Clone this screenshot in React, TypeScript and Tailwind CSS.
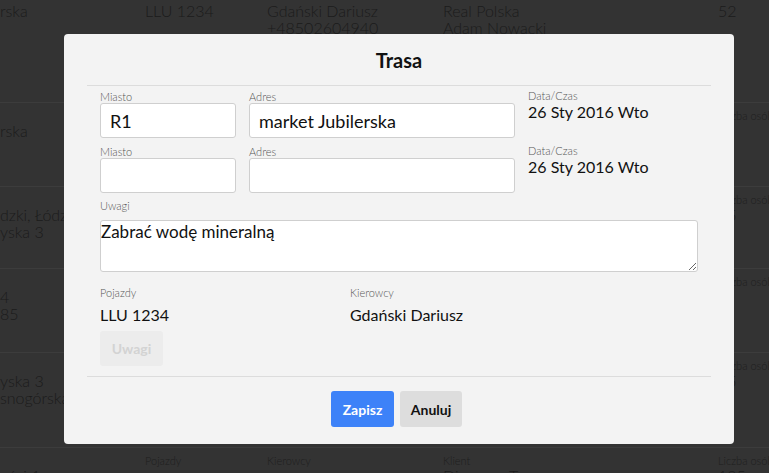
import React from "react";

type Row = {
  h: string;
  col1: string[];
  pojazdy?: string[];
  kierowcy?: string[];
  klient?: string[];
  liczba?: string;
  showLabels?: boolean;
};

const ROWS: Row[] = [
  {
    h: "h-[103px]",
    col1: ["rska"],
    pojazdy: ["LLU 1234"],
    kierowcy: ["Gdański Dariusz", "+48502604940"],
    klient: ["Real Polska", "Adam Nowacki"],
    liczba: "52",
  },
  { h: "h-[84px]", col1: ["rska"], liczba: "2", showLabels: true },
  { h: "h-[82px]", col1: ["dzki, Łódz", "yska 3"], liczba: "25", showLabels: true },
  { h: "h-[84px]", col1: ["4", "85"], liczba: "8", showLabels: true },
  { h: "h-[95px]", col1: ["yska 3", "snogórska"], liczba: "25", showLabels: true },
  { h: "h-[60px]", col1: ["ości 1"], klient: ["Dinozaur Tour"], liczba: "125", showLabels: true },
];

function Cell({ label, lines, show }: { label: string; lines?: string[]; show?: boolean }) {
  return (
    <div className="overflow-hidden whitespace-nowrap">
      {show && <div className="text-[11px] leading-[13px] text-[#1e1e1e]">{label}</div>}
      {(lines ?? []).map((l) => (
        <div key={l} className="text-[16px] leading-[17px]">{l}</div>
      ))}
    </div>
  );
}

function Background() {
  return (
    <div className="font-light text-[#1b1b1b]">
      {ROWS.map((r, i) => (
        <div
          key={i}
          className={`${r.h} grid grid-cols-[145px_122px_176px_275px_1fr] border-b border-[#3c3c3c] ${
            i === 0 ? "pt-[2px] items-start" : "pt-[6px]"
          }`}
        >
          <div className="overflow-hidden whitespace-nowrap">
            {r.showLabels && <div className="h-[13px]" />}
            {r.col1.map((l) => (
              <div key={l} className="text-[16px] leading-[17px]">{l}</div>
            ))}
          </div>
          <Cell label="Pojazdy" lines={r.pojazdy} show={r.showLabels} />
          <Cell label="Kierowcy" lines={r.kierowcy} show={r.showLabels} />
          <Cell label="Klient" lines={r.klient} show={r.showLabels} />
          <Cell label="Liczba osób" lines={r.liczba ? [r.liczba] : []} show={r.showLabels} />
        </div>
      ))}
    </div>
  );
}

function Label({ children, className = "" }: { children: React.ReactNode; className?: string }) {
  return <div className={`text-[11px] font-light leading-[12px] text-[#555] ${className}`}>{children}</div>;
}

function Input({ value = "" }: { value?: string }) {
  return (
    <input
      readOnly
      value={value}
      className="h-[35px] w-full rounded-[3px] border border-[#cfcfcf] bg-white px-[9px] text-[18px] text-[#111] outline-none"
    />
  );
}

function Stop({ miasto, adres }: { miasto?: string; adres?: string }) {
  return (
    <div className="grid grid-cols-[136px_266px_1fr] gap-x-[13px]">
      <div>
        <Label className="pt-[5px]">Miasto</Label>
        <Input value={miasto} />
      </div>
      <div>
        <Label className="pt-[5px]">Adres</Label>
        <Input value={adres} />
      </div>
      <div>
        <Label className="pt-[4px]">Data/Czas</Label>
        <div className="text-[16px] leading-[19px] text-[#111]">26 Sty 2016 Wto</div>
      </div>
    </div>
  );
}

export default function App() {
  return (
    <div
      className="relative h-[473px] w-[769px] overflow-hidden bg-[#333333]"
      style={{ fontFamily: "Lato, 'Noto Sans', sans-serif" }}
    >
      <Background />

      <div className="absolute left-[64px] top-[34px] flex h-[410px] w-[670px] flex-col rounded-[4px] bg-[#f3f3f3]">
        <div className="mx-[23px] flex h-[52px] items-center justify-center border-b border-[#dcdcdc]">
          <h2 className="text-[20px] font-bold text-[#111]">Trasa</h2>
        </div>

        <div className="mx-[23px] border-b border-[#dcdcdc] px-[13px] pb-[10px]">
          <Stop miasto="R1" adres="market Jubilerska" />
          <div className="mt-[3px]">
            <Stop />
          </div>

          <Label className="mt-[7px] mb-[8px]">Uwagi</Label>
          <textarea
            readOnly
            value="Zabrać wodę mineralną"
            className="block h-[52px] w-full rounded-[3px] border border-[#cfcfcf] bg-white px-0 py-[1px] text-[17px] leading-[20px] text-[#111] outline-none"
          />

          <div className="mt-[15px] grid grid-cols-[250px_1fr]">
            <div>
              <Label>Pojazdy</Label>
              <div className="mt-[6px] text-[16px] leading-[19px] text-[#111]">LLU 1234</div>
            </div>
            <div>
              <Label>Kierowcy</Label>
              <div className="mt-[6px] text-[16px] leading-[19px] text-[#111]">Gdański Dariusz</div>
            </div>
          </div>

          <button
            disabled
            className="mt-[7px] h-[35px] w-[63px] rounded-[3px] bg-[#ececec] text-[14px] font-bold text-[#d3d3d3]"
          >
            Uwagi
          </button>
        </div>

        <div className="mt-[14px] flex justify-center gap-[6px] pr-[5px]">
          <button className="h-[36px] w-[63px] rounded-[3px] bg-[#3d82f8] text-[14px] font-bold text-white">
            Zapisz
          </button>
          <button className="h-[36px] w-[62px] rounded-[3px] bg-[#dddddd] text-[14px] font-bold text-[#111]">
            Anuluj
          </button>
        </div>
      </div>
    </div>
  );
}
